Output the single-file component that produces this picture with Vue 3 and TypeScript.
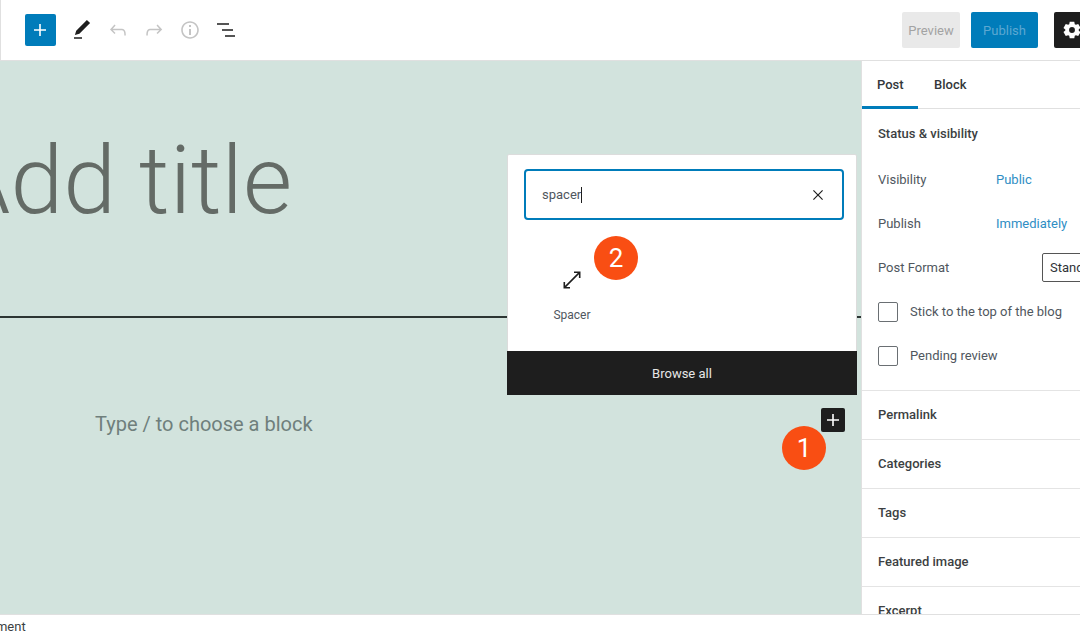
<template>
  <div class="editor">
    <!-- Top toolbar -->
    <header class="topbar">
      <div class="tools">
        <button class="add-btn" aria-label="Add block">
          <svg width="24" height="24" viewBox="0 0 24 24"><path d="M18 11.200h-5.200V6h-1.600v5.200H6v1.600h5.200V18h1.600v-5.200H18z" fill="#fff" /></svg>
        </button>
        <span class="tool">
          <svg width="24" height="24" viewBox="0 0 24 24"><path d="M20.100 5.100 16.900 2 6.200 12.700l-1.300 4.400 4.500-1.300zM4 20.800h8v-1.600H4z" fill="#1e1e1e" /></svg>
        </span>
        <span class="tool">
          <svg width="24" height="24" viewBox="0 0 24 24"><path d="M18.300 11.700c-.6-.6-1.400-.9-2.300-.9H6.700l2.900-3.300-1.100-1-4.500 5L8.500 16l1-1-2.700-2.700H16c.5 0 .9.2 1.300.5 1 1 1 3.400 1 4.500v.3h1.500v-.2c0-1.500 0-4.300-1.500-5.700z" fill="#c4c4c4" /></svg>
        </span>
        <span class="tool">
          <svg width="24" height="24" viewBox="0 0 24 24"><path d="M15.600 6.500l-1.100 1 2.900 3.300H8c-.9 0-1.700.3-2.300.9-1.400 1.500-1.400 4.200-1.400 5.600v.2h1.500v-.3c0-1.100 0-3.500 1-4.500.3-.3.7-.5 1.300-.5h9.200L14.500 15l1.100 1.100 4.600-4.600-4.600-5z" fill="#c4c4c4" /></svg>
        </span>
        <span class="tool">
          <svg width="24" height="24" viewBox="0 0 24 24"><path d="M12 3.200c-4.800 0-8.800 3.900-8.800 8.800 0 4.800 3.900 8.800 8.800 8.800 4.800 0 8.800-3.900 8.800-8.800 0-4.800-4-8.800-8.800-8.800zm0 16c-4 0-7.200-3.300-7.200-7.200C4.800 8 8 4.800 12 4.800s7.200 3.300 7.200 7.200c0 4-3.200 7.200-7.200 7.200zM11 17h2v-6h-2zm0-8h2V7h-2z" fill="#c4c4c4" /></svg>
        </span>
        <span class="tool">
          <svg width="24" height="24" viewBox="0 0 24 24"><path d="M3 5.200h12v1.600H3zM8 11.200h11v1.600H8zM11 17.200h10v1.600H11z" fill="#1e1e1e" /></svg>
        </span>
      </div>
      <div class="actions">
        <button class="preview">Preview</button>
        <button class="publish">Publish</button>
        <button class="settings" aria-label="Settings">
          <svg width="22" height="22" viewBox="0 0 24 24"><path fill-rule="evenodd" d="M14.500 3h-5l-.5 2.600-1.300.7-2.500-.9-2.500 4.300 2 1.700v1.200l-2 1.700 2.500 4.300 2.500-.9 1.300.7.500 2.600h5l.5-2.600 1.300-.7 2.500.9 2.500-4.300-2-1.700v-1.200l2-1.700-2.500-4.300-2.500.9-1.300-.7zM12 15.200a3.200 3.200 0 1 1 0-6.400 3.200 3.200 0 0 1 0 6.400z" fill="#fff" /></svg>
        </button>
      </div>
    </header>

    <div class="body">
      <!-- Canvas -->
      <main class="canvas">
        <h1 class="title">Add title</h1>
        <hr class="separator" />
        <p class="placeholder">Type / to choose a block</p>

        <button class="mini-add" aria-label="Add block">
          <svg width="26" height="26" viewBox="0 0 24 24"><path d="M18 11.200h-5.200V6h-1.600v5.200H6v1.600h5.200V18h1.600v-5.200H18z" fill="#fff" /></svg>
        </button>
        <span class="badge badge-one">1</span>

        <!-- Block inserter -->
        <section class="inserter">
          <div class="search-wrap">
            <div class="search">
              <span class="query">spacer</span><span class="caret"></span>
              <svg class="clear" width="20" height="20" viewBox="0 0 24 24"><path d="m13 12 5-5-1-1-5 5-5-5-1 1 5 5-5 5 1 1 5-5 5 5 1-1z" fill="#1e1e1e" /></svg>
            </div>
          </div>
          <div class="results">
            <div class="result">
              <svg width="24" height="24" viewBox="0 0 24 24"><path d="M14 3.500v1.600h3.800L5.100 17.700v-3.700H3.500v6.500H10v-1.600H6.200L18.900 6.300V10h1.600V3.500z" fill="#1e1e1e" /></svg>
              <span>Spacer</span>
            </div>
          </div>
          <div class="browse">Browse all</div>
          <span class="badge badge-two">2</span>
        </section>
      </main>

      <!-- Settings sidebar -->
      <aside class="sidebar">
        <div class="tabs">
          <span class="tab active">Post</span>
          <span class="tab">Block</span>
        </div>
        <div class="status-panel">
          <h2 class="panel-title">Status &amp; visibility</h2>
          <div v-for="row in statusRows" :key="row.label" class="row">
            <span class="row-label">{{ row.label }}</span>
            <a class="row-value">{{ row.value }}</a>
          </div>
          <div class="row format-row">
            <span class="row-label">Post Format</span>
            <span class="format-select">Standard</span>
          </div>
          <label v-for="item in checks" :key="item" class="check">
            <span class="box"></span>
            {{ item }}
          </label>
        </div>
        <div v-for="panel in panels" :key="panel" class="panel">
          <h2 class="panel-title">{{ panel }}</h2>
        </div>
      </aside>
    </div>

    <footer class="footer"><span>Document</span></footer>
  </div>
</template>

<script setup lang="ts">
const statusRows = [
  { label: 'Visibility', value: 'Public' },
  { label: 'Publish', value: 'Immediately' }
];

const checks = ['Stick to the top of the blog', 'Pending review'];

const panels = ['Permalink', 'Categories', 'Tags', 'Featured image', 'Excerpt'];
</script>

<style>
html,
body {
  margin: 0;
  overflow: hidden;
}
</style>

<style scoped>
.editor {
  width: 1080px;
  height: 638px;
  display: flex;
  flex-direction: column;
  overflow: hidden;
  background: #fff;
  font-family: Roboto, "Liberation Sans", sans-serif;
  font-size: 13px;
  color: #3c3f42;
}

.topbar {
  height: 60px;
  flex: none;
  display: flex;
  align-items: center;
  justify-content: space-between;
  padding-left: 23.5px;
  border-bottom: 1px solid #e0e0e0;
  border-left: 1px solid #e0e0e0;
  overflow: hidden;
}

.tools {
  display: flex;
  align-items: center;
}

.add-btn {
  width: 31.5px;
  height: 32px;
  padding: 0;
  border: none;
  border-radius: 2px;
  background: #007cba;
  display: flex;
  align-items: center;
  justify-content: center;
  margin-right: 8px;
}

.tool {
  width: 36px;
  height: 36px;
  display: flex;
  align-items: center;
  justify-content: center;
}

.actions {
  display: flex;
  align-items: center;
  width: 178px;
  flex: none;
}

.actions button {
  height: 36px;
  flex: none;
  padding: 0;
  border: none;
  border-radius: 2px;
  font-family: inherit;
  font-size: 13px;
}

.preview {
  width: 58px;
  background: #e9e9e9;
  color: #a3a3a3;
  margin-right: 11px;
}

.publish {
  width: 67px;
  background: #007cba;
  color: #5ca8d2;
  margin-right: 16px;
}

.settings {
  width: 36px;
  background: #1e1e1e;
  display: flex;
  align-items: center;
  justify-content: center;
}

.body {
  flex: 1;
  min-height: 0;
  display: flex;
}

.canvas {
  position: relative;
  width: 861px;
  flex: none;
  background: #d2e3dd;
  overflow: hidden;
}

.title {
  margin: 59px 0 0 -49px;
  font-size: 95px;
  line-height: 122px;
  font-weight: 300;
  color: #646b66;
  white-space: nowrap;
}

.separator {
  margin: 74px 0 0;
  height: 2px;
  border: none;
  background: #2c3533;
}

.placeholder {
  margin: 0;
  padding: 92px 0 0 95px;
  font-size: 20px;
  line-height: 28px;
  color: #6f7f7c;
}

.mini-add {
  position: absolute;
  left: 821px;
  top: 347px;
  width: 24px;
  height: 24px;
  padding: 0;
  border: none;
  border-radius: 2px;
  background: #1e1e1e;
  display: flex;
  align-items: center;
  justify-content: center;
}

.badge {
  position: absolute;
  width: 44px;
  height: 44px;
  border-radius: 50%;
  background: #f94e13;
  color: #fff;
  font-size: 26px;
  line-height: 44px;
  text-align: center;
}

.badge-one {
  left: 782px;
  top: 365px;
}

.badge-two {
  left: 86px;
  top: 81px;
}

.inserter {
  position: absolute;
  left: 507px;
  top: 93px;
  width: 350px;
  height: 241px;
  box-sizing: border-box;
  display: flex;
  flex-direction: column;
  background: #fff;
  border: 1px solid #dcdcdc;
  border-radius: 2px;
}

.search-wrap {
  padding: 14px 12px 0 16px;
}

.search {
  height: 51px;
  box-sizing: border-box;
  display: flex;
  align-items: center;
  padding: 0 14px 0 16px;
  border: 2px solid #007cba;
  border-radius: 4px;
  color: #50575e;
}

.query {
  font-size: 13px;
}

.caret {
  width: 1px;
  height: 16px;
  background: #1e1e1e;
}

.clear {
  margin-left: auto;
}

.results {
  flex: 1;
  padding: 0 0 0 16px;
}

.result {
  width: 96px;
  display: flex;
  flex-direction: column;
  align-items: center;
  gap: 15px;
  padding-top: 48px;
  font-size: 12px;
  line-height: 16px;
  color: #50575e;
}

.browse {
  height: 44px;
  flex: none;
  margin: 0 -1px -1px;
  background: #1e1e1e;
  color: #e6e6e6;
  display: flex;
  align-items: center;
  justify-content: center;
}

.sidebar {
  flex: 1;
  min-width: 0;
  border-left: 1px solid #e0e0e0;
  overflow: hidden;
}

.tabs {
  height: 47px;
  display: flex;
  border-bottom: 1px solid #e0e0e0;
  font-weight: 500;
}

.tab {
  box-sizing: border-box;
  height: 48px;
  display: flex;
  align-items: center;
  padding: 1px 15px 2px 16px;
  color: #33373a;
}

.tab.active {
  width: 56px;
  padding: 1px 0 0 15px;
  border-bottom: 3px solid #007cba;
}

.status-panel {
  padding: 16px 0 0 16px;
  height: 265px;
  border-bottom: 1px solid #e4e4e4;
}

.panel-title {
  margin: 0;
  font-size: 13px;
  line-height: 18px;
  font-weight: 500;
  color: #3c3f42;
}

.row {
  display: flex;
  align-items: center;
  height: 44px;
}

.status-panel .panel-title + .row {
  margin-top: 14.5px;
}

.row-label {
  width: 118px;
  flex: none;
  color: #50575e;
}

.row-value {
  color: #2f8ec4;
}

.format-select {
  width: 120px;
  height: 29px;
  box-sizing: border-box;
  flex: none;
  margin-left: 46px;
  padding: 0 7px;
  line-height: 27px;
  border: 1px solid #555;
  border-radius: 2px;
  color: #2f3337;
  white-space: nowrap;
}

.check {
  display: flex;
  align-items: center;
  gap: 12px;
  height: 44px;
  color: #50575e;
}

.box {
  width: 20px;
  height: 20px;
  box-sizing: border-box;
  flex: none;
  border: 1px solid #6a6f73;
  border-radius: 2px;
}

.panel {
  height: 48px;
  display: flex;
  align-items: center;
  padding-left: 16px;
  border-bottom: 1px solid #e4e4e4;
}

.footer {
  height: 24px;
  flex: none;
  box-sizing: border-box;
  position: relative;
  z-index: 1;
  border-top: 1px solid #e0e0e0;
  background: #fff;
  line-height: 24px;
  color: #3c3f42;
  overflow: hidden;
}

.footer span {
  display: block;
  margin-left: -34px;
}
</style>
